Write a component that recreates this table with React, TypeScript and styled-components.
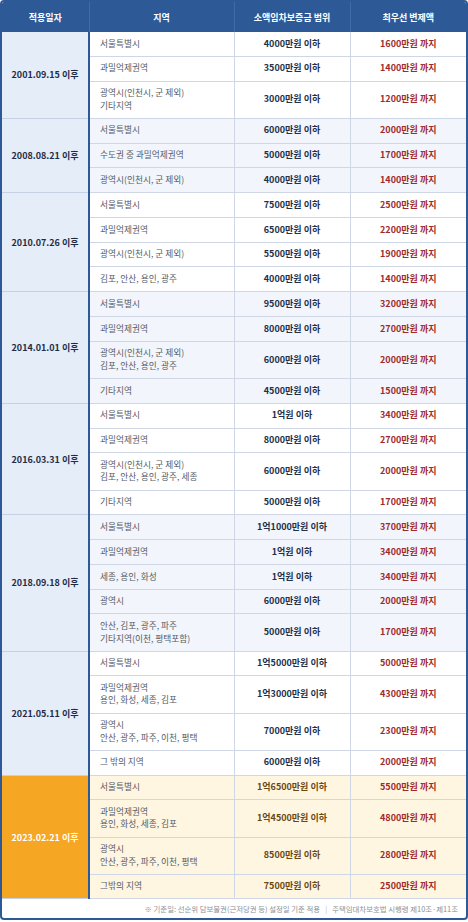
import React from 'react';
import styled, { createGlobalStyle } from 'styled-components';

const GlobalStyle = createGlobalStyle`
  html, body {
    margin: 0;
    padding: 0;
    background: #ffffff;
  }
  body {
    font-family: "Noto Sans CJK KR", "Noto Sans", sans-serif;
  }
`;

type Row = { region: string[]; range: string; max: string };
type Group = { date: string; rows: Row[]; highlight?: boolean };

const groups: Group[] = [
  {
    date: '2001.09.15 이후',
    rows: [
      { region: ['서울특별시'], range: '4000만원 이하', max: '1600만원 까지' },
      { region: ['과밀억제권역'], range: '3500만원 이하', max: '1400만원 까지' },
      { region: ['광역시(인천시, 군 제외)', '기타지역'], range: '3000만원 이하', max: '1200만원 까지' },
    ],
  },
  {
    date: '2008.08.21 이후',
    rows: [
      { region: ['서울특별시'], range: '6000만원 이하', max: '2000만원 까지' },
      { region: ['수도권 중 과밀억제권역'], range: '5000만원 이하', max: '1700만원 까지' },
      { region: ['광역시(인천시, 군 제외)'], range: '4000만원 이하', max: '1400만원 까지' },
    ],
  },
  {
    date: '2010.07.26 이후',
    rows: [
      { region: ['서울특별시'], range: '7500만원 이하', max: '2500만원 까지' },
      { region: ['과밀억제권역'], range: '6500만원 이하', max: '2200만원 까지' },
      { region: ['광역시(인천시, 군 제외)'], range: '5500만원 이하', max: '1900만원 까지' },
      { region: ['김포, 안산, 용인, 광주'], range: '4000만원 이하', max: '1400만원 까지' },
    ],
  },
  {
    date: '2014.01.01 이후',
    rows: [
      { region: ['서울특별시'], range: '9500만원 이하', max: '3200만원 까지' },
      { region: ['과밀억제권역'], range: '8000만원 이하', max: '2700만원 까지' },
      { region: ['광역시(인천시, 군 제외)', '김포, 안산, 용인, 광주'], range: '6000만원 이하', max: '2000만원 까지' },
      { region: ['기타지역'], range: '4500만원 이하', max: '1500만원 까지' },
    ],
  },
  {
    date: '2016.03.31 이후',
    rows: [
      { region: ['서울특별시'], range: '1억원 이하', max: '3400만원 까지' },
      { region: ['과밀억제권역'], range: '8000만원 이하', max: '2700만원 까지' },
      { region: ['광역시(인천시, 군 제외)', '김포, 안산, 용인, 광주, 세종'], range: '6000만원 이하', max: '2000만원 까지' },
      { region: ['기타지역'], range: '5000만원 이하', max: '1700만원 까지' },
    ],
  },
  {
    date: '2018.09.18 이후',
    rows: [
      { region: ['서울특별시'], range: '1억1000만원 이하', max: '3700만원 까지' },
      { region: ['과밀억제권역'], range: '1억원 이하', max: '3400만원 까지' },
      { region: ['세종, 용인, 화성'], range: '1억원 이하', max: '3400만원 까지' },
      { region: ['광역시'], range: '6000만원 이하', max: '2000만원 까지' },
      { region: ['안산, 김포, 광주, 파주', '기타지역(이천, 평택포함)'], range: '5000만원 이하', max: '1700만원 까지' },
    ],
  },
  {
    date: '2021.05.11 이후',
    rows: [
      { region: ['서울특별시'], range: '1억5000만원 이하', max: '5000만원 까지' },
      { region: ['과밀억제권역', '용인, 화성, 세종, 김포'], range: '1억3000만원 이하', max: '4300만원 까지' },
      { region: ['광역시', '안산, 광주, 파주, 이천, 평택'], range: '7000만원 이하', max: '2300만원 까지' },
      { region: ['그 밖의 지역'], range: '6000만원 이하', max: '2000만원 까지' },
    ],
  },
  {
    date: '2023.02.21 이후',
    highlight: true,
    rows: [
      { region: ['서울특별시'], range: '1억6500만원 이하', max: '5500만원 까지' },
      { region: ['과밀억제권역', '용인, 화성, 세종, 김포'], range: '1억4500만원 이하', max: '4800만원 까지' },
      { region: ['광역시', '안산, 광주, 파주, 이천, 평택'], range: '8500만원 이하', max: '2800만원 까지' },
      { region: ['그밖의 지역'], range: '7500만원 이하', max: '2500만원 까지' },
    ],
  },
];

const Card = styled.div`
  width: 468px;
  height: 920px;
  box-sizing: border-box;
  border: 2px solid #2d5a97;
  border-radius: 4px;
  overflow: hidden;
  display: flex;
  flex-direction: column;
  background: #ffffff;
`;

const Table = styled.table`
  width: 464px;
  border-collapse: collapse;
  table-layout: fixed;
`;

const HeadCell = styled.th`
  height: 30px;
  padding: 0;
  background: #2d5a97;
  color: #ffffff;
  font-size: 9px;
  font-weight: 700;
  text-align: center;
  border-right: 1px solid #3f6ba6;
  &:last-child {
    border-right: none;
  }
`;

const DateCell = styled.td<{ $hl?: boolean }>`
  padding: 0;
  text-align: center;
  vertical-align: middle;
  font-size: 9px;
  font-weight: 700;
  color: ${(p) => (p.$hl ? '#ffffff' : '#1f2c47')};
  background: ${(p) => (p.$hl ? '#f5a623' : '#e5edf8')};
  border-right: 2px solid #2d5a97;
  border-bottom: 1px solid #c6d1e4;
`;

const BodyRow = styled.tr<{ $tint: 'plain' | 'blue' | 'cream' }>`
  background: ${(p) => (p.$tint === 'cream' ? '#fff6e1' : p.$tint === 'blue' ? '#f2f5fb' : '#ffffff')};
`;

const Cell = styled.td`
  padding: 5.7px 0;
  line-height: 12.4px;
  font-size: 9px;
  border-bottom: 1px solid #cfd7e6;
  border-right: 1px solid #cfd7e6;
  &:last-child {
    border-right: none;
  }
`;

const RegionCell = styled(Cell)`
  padding-left: 10px;
  color: #555b66;
  font-size: 8.7px;
`;

const RangeCell = styled(Cell)<{ $hl?: boolean }>`
  text-align: center;
  font-weight: 700;
  color: ${(p) => (p.$hl ? '#6b4812' : '#22304a')};
`;

const MaxCell = styled(Cell)`
  text-align: center;
  font-weight: 700;
  color: #9e2a2d;
`;

const RegionLine = styled.div`
  white-space: nowrap;
`;

const Footer = styled.div`
  flex: 1;
  display: flex;
  align-items: center;
  justify-content: flex-end;
  padding: 0 8px 1px 0;
  font-size: 7.4px;
  color: #8c8f96;
  white-space: nowrap;
`;

const Divider = styled.span`
  margin: 0 5px;
  color: #b9bec8;
`;

export default function App() {
  return (
    <>
      <GlobalStyle />
      <Card>
        <Table>
          <colgroup>
            <col style={{ width: 87 }} />
            <col style={{ width: 145 }} />
            <col style={{ width: 116 }} />
            <col style={{ width: 116 }} />
          </colgroup>
          <thead>
            <tr>
              <HeadCell>적용일자</HeadCell>
              <HeadCell>지역</HeadCell>
              <HeadCell>소액임차보증금 범위</HeadCell>
              <HeadCell>최우선 변제액</HeadCell>
            </tr>
          </thead>
          <tbody>
            {groups.map((g, gi) =>
              g.rows.map((r, ri) => (
                <BodyRow
                  key={`${gi}-${ri}`}
                  $tint={g.highlight ? 'cream' : gi % 2 === 1 ? 'blue' : 'plain'}
                >
                  {ri === 0 && (
                    <DateCell rowSpan={g.rows.length} $hl={g.highlight}>
                      {g.date}
                    </DateCell>
                  )}
                  <RegionCell>
                    {r.region.map((line) => (
                      <RegionLine key={line}>{line}</RegionLine>
                    ))}
                  </RegionCell>
                  <RangeCell $hl={g.highlight}>{r.range}</RangeCell>
                  <MaxCell>{r.max}</MaxCell>
                </BodyRow>
              ))
            )}
          </tbody>
        </Table>
        <Footer>
          ※ 기준일: 선순위 담보물권(근저당권 등) 설정일 기준 적용
          <Divider>|</Divider>
          주택임대차보호법 시행령 제10조·제11조
        </Footer>
      </Card>
    </>
  );
}
